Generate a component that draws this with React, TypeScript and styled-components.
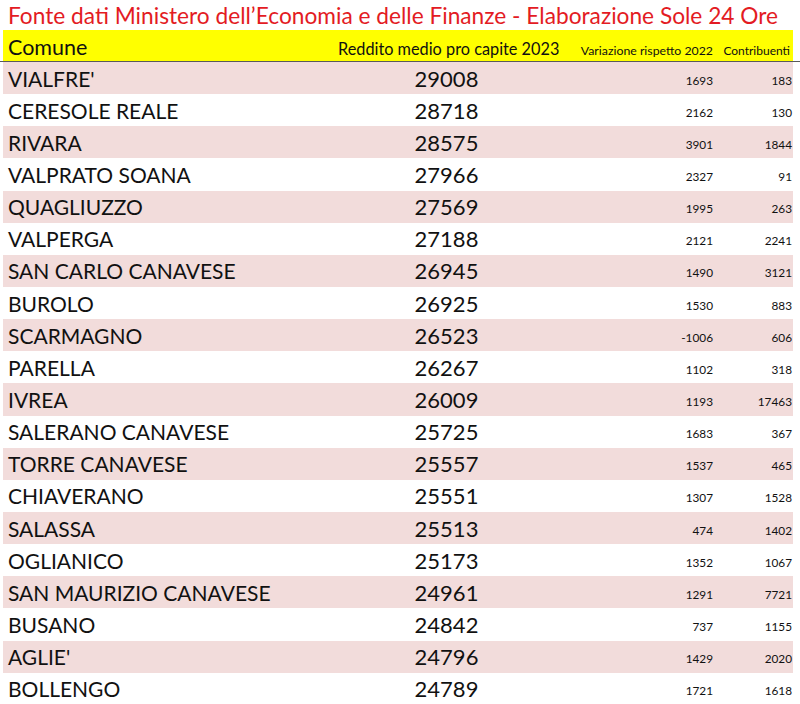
import styled, { createGlobalStyle } from "styled-components";

const GlobalStyle = createGlobalStyle`
  html, body {
    margin: 0;
    padding: 0;
    background: #ffffff;
  }
  body {
    font-family: Lato, "Open Sans", Arial, sans-serif;
    color: #111;
  }
`;

const Page = styled.div`
  width: 800px;
  height: 704px;
  overflow: hidden;
  background: #ffffff;
`;

const Title = styled.h1`
  margin: 0;
  height: 30px;
  padding-left: 8px;
  font-size: 22.7px;
  font-weight: 400;
  line-height: 31px;
  color: #e31b23;
  white-space: nowrap;
`;

const HeaderBar = styled.div`
  border-bottom: 1px solid #5a5a5a;
`;

const Grid = styled.div`
  display: grid;
  grid-template-columns: 330px 227px 156px 77px;
  margin-left: 3px;
  width: 790px;
`;

const HeaderRow = styled(Grid)`
  box-sizing: border-box;
  height: 31px;
  padding-top: 4px;
  background: #ffff00;
  align-items: baseline;
`;

const Row = styled(Grid)<{ $shaded: boolean }>`
  height: 32.15px;
  align-items: center;
  background: ${(p) => (p.$shaded ? "#f2dcdb" : "#ffffff")};
`;

const HeadCell = styled.div<{ $size: number; $align: "left" | "center" | "right" }>`
  font-size: ${(p) => p.$size}px;
  text-align: ${(p) => p.$align};
  padding: 0 3px 0 5px;
  white-space: nowrap;
`;

const NameCell = styled.div`
  font-size: 21px;
  padding-left: 5px;
  white-space: nowrap;
`;

const IncomeCell = styled.div`
  font-size: 22px;
  text-align: center;
`;

const SmallCell = styled.div<{ $pad: number }>`
  font-size: 11.8px;
  text-align: right;
  padding-right: ${(p) => p.$pad}px;
  padding-top: 4px;
`;

const rows: [string, number, number, number][] = [
  ["VIALFRE'", 29008, 1693, 183],
  ["CERESOLE REALE", 28718, 2162, 130],
  ["RIVARA", 28575, 3901, 1844],
  ["VALPRATO SOANA", 27966, 2327, 91],
  ["QUAGLIUZZO", 27569, 1995, 263],
  ["VALPERGA", 27188, 2121, 2241],
  ["SAN CARLO CANAVESE", 26945, 1490, 3121],
  ["BUROLO", 26925, 1530, 883],
  ["SCARMAGNO", 26523, -1006, 606],
  ["PARELLA", 26267, 1102, 318],
  ["IVREA", 26009, 1193, 17463],
  ["SALERANO CANAVESE", 25725, 1683, 367],
  ["TORRE CANAVESE", 25557, 1537, 465],
  ["CHIAVERANO", 25551, 1307, 1528],
  ["SALASSA", 25513, 474, 1402],
  ["OGLIANICO", 25173, 1352, 1067],
  ["SAN MAURIZIO CANAVESE", 24961, 1291, 7721],
  ["BUSANO", 24842, 737, 1155],
  ["AGLIE'", 24796, 1429, 2020],
  ["BOLLENGO", 24789, 1721, 1618],
];

export default function App() {
  return (
    <Page>
      <GlobalStyle />
      <Title>Fonte dati Ministero dell’Economia e delle Finanze - Elaborazione Sole 24 Ore</Title>
      <HeaderBar>
        <HeaderRow>
          <HeadCell $size={21.5} $align="left">Comune</HeadCell>
          <HeadCell $size={16.3} $align="center">Reddito medio pro capite 2023</HeadCell>
          <HeadCell $size={12.3} $align="right">Variazione rispetto 2022</HeadCell>
          <HeadCell $size={12} $align="right">Contribuenti</HeadCell>
        </HeaderRow>
      </HeaderBar>
      {rows.map(([name, income, delta, count], i) => (
        <Row key={name} $shaded={i % 2 === 0}>
          <NameCell>{name}</NameCell>
          <IncomeCell>{income}</IncomeCell>
          <SmallCell $pad={3}>{delta}</SmallCell>
          <SmallCell $pad={1}>{count}</SmallCell>
        </Row>
      ))}
    </Page>
  );
}
